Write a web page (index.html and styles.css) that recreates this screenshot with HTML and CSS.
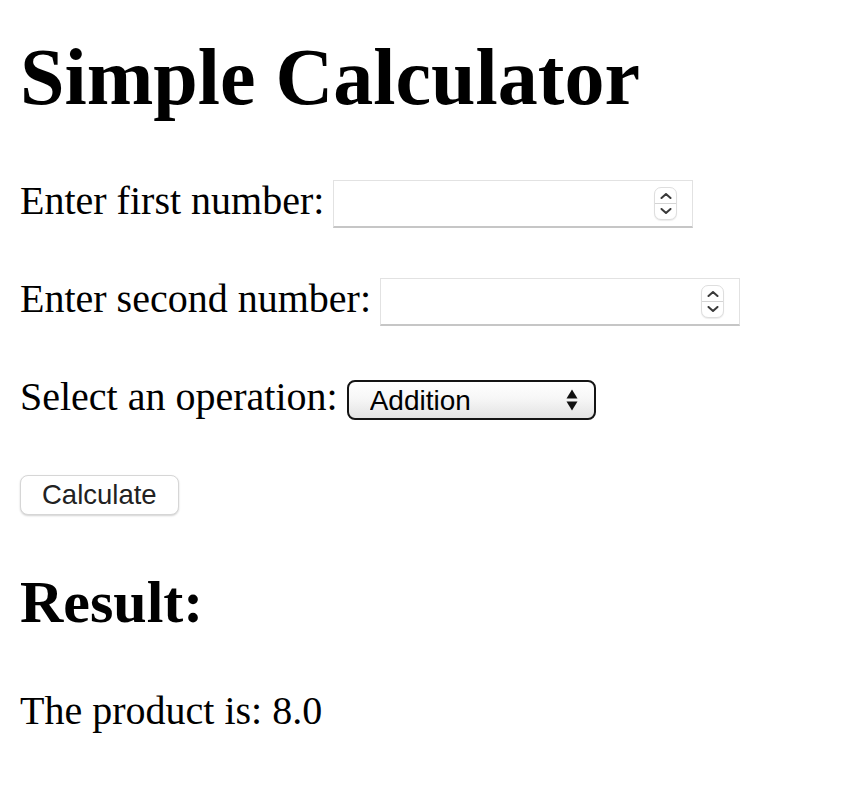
FILE: index.html
```html
<!DOCTYPE html>
<html lang="en">
<head>
<meta charset="utf-8">
<title>Simple Calculator</title>
<link rel="stylesheet" href="styles.css">
</head>
<body>
<h1 class="title">Simple Calculator</h1>
<form class="calc">
  <div class="row">
    <label class="label" for="n1">Enter first number:</label>
    <span class="num">
      <input class="num-input" id="n1" type="text">
      <span class="spin">
        <svg class="chev" viewBox="0 0 12 6" width="12" height="6"><path d="M1.5 5 L6 1 L10.5 5" fill="none" stroke="#3a3a3a" stroke-width="2" stroke-linecap="round" stroke-linejoin="round"/></svg>
        <span class="spin-div"></span>
        <svg class="chev" viewBox="0 0 12 6" width="12" height="6"><path d="M1.5 1 L6 5 L10.5 1" fill="none" stroke="#3a3a3a" stroke-width="2" stroke-linecap="round" stroke-linejoin="round"/></svg>
      </span>
    </span>
  </div>
  <div class="row">
    <label class="label" for="n2">Enter second number:</label>
    <span class="num">
      <input class="num-input" id="n2" type="text">
      <span class="spin">
        <svg class="chev" viewBox="0 0 12 6" width="12" height="6"><path d="M1.5 5 L6 1 L10.5 5" fill="none" stroke="#3a3a3a" stroke-width="2" stroke-linecap="round" stroke-linejoin="round"/></svg>
        <span class="spin-div"></span>
        <svg class="chev" viewBox="0 0 12 6" width="12" height="6"><path d="M1.5 1 L6 5 L10.5 1" fill="none" stroke="#3a3a3a" stroke-width="2" stroke-linecap="round" stroke-linejoin="round"/></svg>
      </span>
    </span>
  </div>
  <div class="row">
    <label class="label" for="op">Select an operation:</label>
    <span class="select">
      <select class="select-el" id="op">
        <option>Addition</option>
        <option>Subtraction</option>
        <option>Multiplication</option>
        <option>Division</option>
      </select>
      <svg class="arrows" viewBox="0 0 12 22" width="12" height="22"><path d="M0.5 9.5 L6 0.5 L11.5 9.5 Z" fill="#111"/><path d="M0.5 12.5 L11.5 12.5 L6 21.5 Z" fill="#111"/></svg>
    </span>
  </div>
  <div class="actions">
    <button class="btn" type="button">Calculate</button>
  </div>
</form>
<h2 class="result-title">Result:</h2>
<p class="result">The product is: 8.0</p>
</body>
</html>
```
FILE: styles.css
```css
html, body {
  margin: 0;
  padding: 0;
  background: #fff;
}
body {
  padding: 0 20px;
  font-family: "Liberation Serif", "Times New Roman", serif;
  font-size: 40px;
  color: #000;
}
.title {
  margin: 31px 0 0;
  font-size: 80px;
  line-height: 92px;
  font-weight: bold;
}
.calc {
  margin: 57px 0 0;
}
.row {
  display: flex;
  align-items: center;
  gap: 9px;
  height: 48px;
  margin-bottom: 50px;
}
.row:last-of-type {
  margin-bottom: 0;
}
.label {
  line-height: 44px;
  padding-bottom: 6px;
  white-space: nowrap;
}
.num {
  display: flex;
  align-items: center;
  box-sizing: border-box;
  width: 360px;
  height: 48px;
  border: 1px solid #e2e2e2;
  border-bottom: 2px solid #c6c6c6;
  background: #fff;
  padding-right: 15px;
}
.num-input {
  flex: 1;
  min-width: 0;
  border: none;
  outline: none;
  background: transparent;
  font-family: "Liberation Sans", Arial, sans-serif;
  font-size: 28px;
  padding: 0 6px;
}
.spin {
  display: flex;
  flex-direction: column;
  align-items: center;
  justify-content: space-between;
  box-sizing: border-box;
  width: 23px;
  height: 33px;
  padding: 5px 0;
  border: 1px solid #dedede;
  border-radius: 7px;
  background: #fff;
  box-shadow: 0 1px 1px rgba(0,0,0,0.08);
}
.spin-div {
  width: 100%;
  height: 1px;
  background: #d4d4d4;
}
.chev {
  display: block;
}
.select {
  display: flex;
  align-items: center;
  box-sizing: border-box;
  width: 249px;
  height: 40px;
  border: 2px solid #141414;
  border-radius: 8px;
  background: linear-gradient(#ffffff 0%, #f7f7f7 45%, #e3e3e3 100%);
  padding-right: 16px;
}
.select-el {
  flex: 1;
  min-width: 0;
  -webkit-appearance: none;
  appearance: none;
  border: none;
  outline: none;
  background: transparent;
  font-family: "Liberation Sans", Arial, sans-serif;
  font-size: 28px;
  color: #000;
  padding: 0 0 0 21px;
  height: 36px;
}
.arrows {
  display: block;
}
.actions {
  margin-top: 51px;
}
.btn {
  display: block;
  box-sizing: border-box;
  height: 40px;
  padding: 0 21px;
  margin: 0;
  border: 1px solid #d6d6d6;
  border-radius: 8px;
  background: #fff;
  box-shadow: 0 1px 2px rgba(0,0,0,0.18);
  font-family: "Liberation Sans", Arial, sans-serif;
  font-size: 27.5px;
  color: #222;
}
.result-title {
  margin: 53px 0 0;
  font-size: 60px;
  line-height: 69px;
  font-weight: bold;
}
.result {
  margin: 51px 0 0;
  line-height: 46px;
}
```
